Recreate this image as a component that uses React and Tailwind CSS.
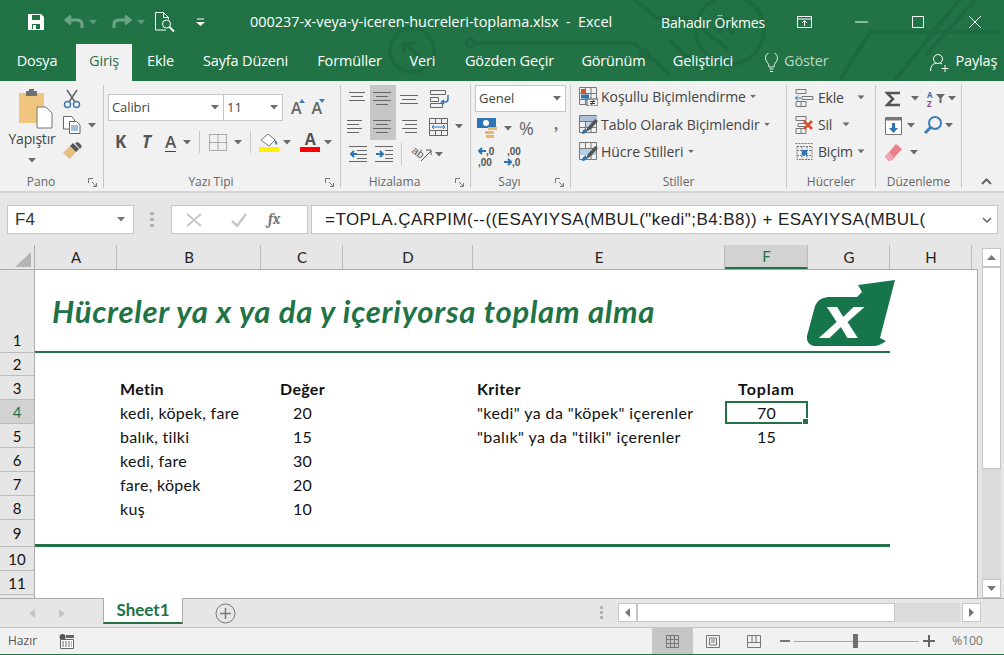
import React from 'react';

const ui = { fontFamily: '"Open Sans", "Noto Sans", sans-serif' };
const cal = { fontFamily: 'Lato, "Liberation Sans", sans-serif' };
const arial = { fontFamily: '"Liberation Sans", Arial, sans-serif' };

const Caret = ({ color = '#6a6a6a', className = '' }) => (
  <svg width="8" height="5" viewBox="0 0 8 5" className={className}><path d="M0 0h8L4 4.5z" fill={color} /></svg>
);

const Lines = ({ rows, w = 20 }) => (
  <svg width={w} height="16" viewBox={`0 0 ${w} 16`}>
    {rows.map((r, i) => <path key={i} d={`M${r[0]} ${1.5 + i * 4}H${r[1]}`} stroke="#666" strokeWidth="1" />)}
  </svg>
);

// title bar circuit pattern
const Circuit = () => (
  <svg className="absolute left-0 top-0" width="1004" height="81" viewBox="0 0 1004 81" fill="none" stroke="#1e6a40" strokeWidth="4">
    <circle cx="412" cy="50" r="22" />
    <path d="M420 58l-15-15M404 54V43h11" />
    <circle cx="470" cy="43" r="4" />
    <path d="M474 43h160l36 32" />
    <circle cx="645" cy="54" r="4" />
    <path d="M635 0l22 18h30l42 32M670 40l30 30" />
    <circle cx="730" cy="30" r="34" />
    <path d="M734 34L722 22M720 34V20h14" strokeWidth="5" />
    <path d="M840 80l30-48h130M895 80l64-80M925 56l50-56" />
  </svg>
);

const Logo = () => (
  <svg className="absolute left-[806px] top-[9px] overflow-visible" width="91" height="70" viewBox="806 279 91 70">
    <path d="M895 280L858 285L862 292L857 297H828Q818 298 815 306L807 336Q806 344 814 346H873Q880 346 886 341L880 338Z" fill="#17754c" />
    <text transform="translate(822 338) scale(1.2 1)" fill="#fff" style={arial} fontWeight="700" fontStyle="italic" fontSize="60">x</text>
  </svg>
);

const tabs = [
  ['Dosya', 'w-[74px] pr-[4px]'], ['Giriş', 'w-[56px] bg-[#f1f1f1] text-[#217346]'], ['Ekle', 'w-[57px]'], ['Sayfa Düzeni', 'w-[113px]'],
  ['Formüller', 'w-[95px]'], ['Veri', 'w-[51px]'], ['Gözden Geçir', 'w-[123px]'], ['Görünüm', 'w-[85px]'], ['Geliştirici', 'w-[94px]'],
];

const TitleBar = () => (
  <div className="relative h-[81px] bg-[#217346] text-white" style={ui}>
    <Circuit />
    <div className="relative flex h-[44px] items-center">
      <svg className="ml-[28px]" width="16" height="16" viewBox="0 0 16 16"><path d="M0 0h13l3 3v13H0z" fill="#fff" /><path d="M4 1h8v5H4zM4 10h8v5H4z" fill="#217346" /><path d="M5 11h3v4H5z" fill="#fff" /></svg>
      <svg className="ml-[20px]" width="20" height="16" viewBox="0 0 20 16" fill="none" stroke="#6aa484" strokeWidth="3"><path d="M7 2L2 6l5 4M2 6h10q6 0 6 4v4" /></svg>
      <Caret color="#5d9c7b" className="ml-[5px]" />
      <svg className="ml-[15px]" width="20" height="16" viewBox="0 0 20 16" fill="none" stroke="#6aa484" strokeWidth="3"><path d="M13 2l5 4-5 4M18 6H8q-6 0-6 4v4" /></svg>
      <Caret color="#5d9c7b" className="ml-[5px]" />
      <svg className="ml-[10px]" width="20" height="20" viewBox="0 0 20 20" fill="none" stroke="#fff" strokeWidth="1"><path d="M11 18H.5V.5h8l5 5v2M8.5.5v5h5" /><circle cx="11.5" cy="12" r="4" /><path d="M14.5 15l4.5 4.5" strokeWidth="2" /></svg>
      <svg className="ml-[21px]" width="9" height="9" viewBox="0 0 9 9"><path d="M1 1h7" stroke="#fff" /><path d="M0 4h9L4.5 8z" fill="#fff" /></svg>
      <div className="ml-[45px] w-[411px] whitespace-pre text-[14.5px] tracking-[-0.05px]">000237-x-veya-y-iceren-hucreleri-toplama.xlsx  -  Excel</div>
      <div className="w-[136px] text-[14px] tracking-[-0.15px]">Bahadır Örkmes</div>
      <svg width="15" height="12" viewBox="0 0 15 12" fill="none" stroke="#fff"><path d="M.5.5h14v11H.5zM.5 3h14M7.5 10V5M5 7l2.500-2.500L10 7" /></svg>
      <svg className="ml-[43px]" width="13" height="2" viewBox="0 0 13 2"><path d="M0 1h13" stroke="#fff" /></svg>
      <svg className="ml-[44px]" width="12" height="12" viewBox="0 0 12 12"><path d="M.5.5h11v11H.5z" fill="none" stroke="#fff" /></svg>
      <svg className="ml-[45px]" width="12" height="12" viewBox="0 0 12 12"><path d="M0 0l12 12M12 0L0 12" stroke="#fff" /></svg>
    </div>
    <div className="relative flex h-[37px] pl-[2px] text-[14.5px] tracking-[-0.15px]">
      {tabs.map(([t, c]) => <div key={t} className={`flex items-center justify-center pb-[3px] ${c}`}>{t}</div>)}
      <svg className="ml-[14px] mt-[9px]" width="15" height="20" viewBox="0 0 15 20" fill="none" stroke="#e4efe8"><path d="M5 14q0-3-2-5a6 6 0 1 1 9 0q-2 2-2 5zM5.500 16h4M6 18.500h3" /></svg>
      <div className="ml-[5px] flex items-center pb-[3px] text-[#bcd6c7]">Göster</div>
      <svg className="ml-[101px] mt-[9px]" width="20" height="20" viewBox="0 0 20 20" fill="none" stroke="#fff"><circle cx="8" cy="6" r="4.500" /><path d="M.5 18q0-7 6-8M10 10l2 1M15 12v7M11.500 15.500h7" /></svg>
      <div className="ml-[6px] flex items-center pb-[3px]">Paylaş</div>
    </div>
  </div>
);

const Group = ({ label, w, launcher, children }) => (
  <div className={`relative flex h-[103px] shrink-0 flex-col border-r border-[#c6c6c6] ${w}`}>
    <div className="h-[87px] shrink-0">{children}</div>
    <div className={`shrink-0 pt-[3px] text-center text-[12px] leading-[14px] text-[#666] ${launcher ? 'pr-[22px]' : ''}`}>{label}</div>
    {launcher && (
      <svg className="absolute bottom-[1px] right-[6px]" width="9" height="9" viewBox="0 0 9 9" fill="none" stroke="#777"><path d="M.5 5V.5H5M4 4l4 4M8.500 5v3.500H5" /></svg>
    )}
  </div>
);

const Btn = ({ className = '', children }) => <div className={`flex items-center justify-center ${className}`}>{children}</div>;

const Pano = () => (
  <Group label="Pano" w="w-[103px]" launcher>
    <div className="flex h-full text-[#444]">
      <div className="flex w-[58px] flex-col items-center pl-[4px] pt-[4px]">
        <svg className="ml-[6px]" width="36" height="40" viewBox="0 0 36 40">
          <path d="M2 4h25v30H2z" fill="#f0c67e" />
          <path d="M9 2h11v5H9z" fill="#707070" /><path d="M12 0h5v3h-5z" fill="#707070" />
          <path d="M20 18h9l6 6v15H20z" fill="#fff" stroke="#777" />
        </svg>
        <div className="mt-[1px] text-[14px] leading-[18px] tracking-[-0.2px]">Yapıştır</div>
        <Caret className="mt-[10px]" />
      </div>
      <div className="flex flex-col pl-[4px] pt-[4px]">
        <svg width="18" height="20" viewBox="0 0 18 20" fill="none"><path d="M4 1l8 12M14 1L6 13" stroke="#666" strokeWidth="1.500" /><circle cx="4.500" cy="15.500" r="3" stroke="#3e7cb8" strokeWidth="1.500" /><circle cx="13.500" cy="15.500" r="3" stroke="#3e7cb8" strokeWidth="1.500" /></svg>
        <div className="mt-[7px] flex items-center">
          <svg width="18" height="18" viewBox="0 0 18 18" fill="#fff" stroke="#666"><path d="M.5.5h8l3 3V13H.5z" /><path d="M6.500 5.500h7l3.500 3.500v8.500H6.500z" /><path d="M8 10h7M8 12h7M8 14h7" stroke="#3e7cb8" /></svg>
          <Caret className="ml-[7px]" />
        </div>
        <svg className="mt-[8px]" width="19" height="17" viewBox="0 0 19 17"><path d="M0 11l7-7 6 6-6 7q-3-2-7-6z" fill="#e6bf82" /><path d="M7 4l3-3 6 6-3 3zM12 1l3-1 4 4-2 3z" fill="#555" /></svg>
      </div>
    </div>
  </Group>
);

const YaziTipi = () => (
  <Group label="Yazı Tipi" w="w-[237px]" launcher>
    <div className="pl-[4px] pt-[9px] text-[#444]">
      <div className="flex h-[27px] items-center">
        <div className="flex h-full w-[116px] items-center justify-between border border-[#c6c6c6] bg-white pl-[3px] pr-[4px] text-[13px] tracking-[-0.1px]">Calibri<Caret /></div>
        <div className="flex h-full w-[59px] items-center justify-between border border-l-0 border-[#c6c6c6] bg-white pl-[3px] pr-[4px] text-[13px]">11<Caret /></div>
        <div className="ml-[8px] text-[16px] font-semibold text-[#666]">A</div>
        <svg className="mb-[13px] ml-[-3px]" width="6" height="4" viewBox="0 0 6 4"><path d="M0 4h6L3 0z" fill="#3e7cb8" /></svg>
        <div className="ml-[7px] text-[16px] font-semibold text-[#666]">A</div>
        <svg className="mb-[13px] ml-[-3px]" width="6" height="4" viewBox="0 0 6 4"><path d="M0 0h6L3 4z" fill="#3e7cb8" /></svg>
      </div>
      <div className="mt-[9px] flex h-[24px] items-center">
        <div className="ml-[7px] w-[27px] text-[17px] font-bold text-[#555]">K</div>
        <div className="w-[23px] text-[17px] font-bold italic text-[#555]">T</div>
        <div className="border-b border-[#444] text-[17px] font-semibold leading-[19px] text-[#555]">A</div>
        <Caret className="ml-[7px]" />
        <div className="ml-[8px] h-[22px] w-px bg-[#c6c6c6]" />
        <svg className="ml-[9px]" width="18" height="17" viewBox="0 0 18 17" fill="none" stroke="#666" strokeDasharray="1 1"><path d="M.5.5h17v16H.5zM.5 8.500h17M9 .5v16" /></svg>
        <Caret className="ml-[7px]" />
        <div className="ml-[8px] h-[22px] w-px bg-[#c6c6c6]" />
        <div className="ml-[8px] flex w-[20px] flex-col items-center">
          <svg width="18" height="14" viewBox="0 0 18 14"><path d="M1 7l7-6 7 6-6 6z" fill="#fff" stroke="#777" /><path d="M15 7q3 2 2 5-3-1-2-5z" fill="#3e7cb8" /></svg>
          <div className="h-[5px] w-[20px] bg-[#fff200]" />
        </div>
        <Caret className="ml-[4px]" />
        <div className="ml-[9px] flex w-[20px] flex-col items-center">
          <div className="text-[16px] font-bold leading-[14px] text-[#555]">A</div>
          <div className="mt-[1px] h-[5px] w-[20px] bg-[#f00]" />
        </div>
        <Caret className="ml-[4px]" />
      </div>
    </div>
  </Group>
);

const alignRows = [
  [[[0, 18], [0, 18], [3, 15]], [[0, 18], [3, 15], [0, 18], [3, 15]], [[0, 18], [3, 15], [0, 18], [3, 15]]],
  [[[0, 15], [0, 12], [0, 15], [0, 12]], [[0, 18], [3, 15], [0, 18], [3, 15]], [[3, 18], [6, 18], [3, 18], [6, 18]]],
];

const Hizalama = () => (
  <Group label="Hizalama" w="w-[130px]" launcher>
    <div className="pl-[3px]">
      <div className="flex h-[28px] items-center">
        <Btn className="h-full w-[26px]"><Lines rows={[[2, 18], [4, 16], [2, 18]]} /></Btn>
        <Btn className="h-full w-[26px] bg-[#c6c6c6]"><Lines rows={alignRows[0][1]} /></Btn>
        <Btn className="h-full w-[26px] pt-[6px]"><Lines rows={[[1, 19], [3, 17], [1, 19]]} /></Btn>
        <svg className="ml-[8px]" width="20" height="18" viewBox="0 0 20 18" fill="none" stroke="#666"><path d="M.5.5h15v4H.5zM.5 7.500h8v4h-8zM.5 13.500h12v4H.5z" /><path d="M18 5v4q0 3-3 3h-3M14 10l-2.500 2 2.500 2" stroke="#2e75b6" strokeWidth="1.500" /></svg>
      </div>
      <div className="flex h-[27px] items-center">
        <Btn className="h-full w-[26px]"><Lines rows={alignRows[1][0]} /></Btn>
        <Btn className="h-full w-[26px] bg-[#c6c6c6]"><Lines rows={alignRows[1][1]} /></Btn>
        <Btn className="h-full w-[26px]"><Lines rows={alignRows[1][2]} /></Btn>
        <svg className="ml-[7px]" width="19" height="18" viewBox="0 0 19 18" fill="none" stroke="#666"><path d="M.5.5h18v17H.5zM.5 5.500h18M.5 12.500h18M6.500.5v5M12.500.5v5M6.500 12.500v5M12.500 12.500v5" /><path d="M3 9h13M5 7L3 9l2 2M14 7l2 2-2 2" stroke="#2e75b6" /></svg>
        <Caret className="ml-[7px]" />
      </div>
      <div className="flex h-[28px] items-center">
        <svg className="ml-[5px]" width="18" height="16" viewBox="0 0 18 16" fill="none" stroke="#666"><path d="M0 .5h18M8 4.500h10M8 8.500h10M8 12.500h10M0 15.500h18" /><path d="M8 8H2M5 5L2 8l3 3" stroke="#2e75b6" strokeWidth="2" /></svg>
        <svg className="ml-[8px]" width="18" height="16" viewBox="0 0 18 16" fill="none" stroke="#666"><path d="M0 .5h18M10 4.500h8M10 8.500h8M10 12.500h8M0 15.500h18" /><path d="M1 8h6M5 5l3 3-3 3" stroke="#2e75b6" strokeWidth="2" /></svg>
        <div className="ml-[8px] h-[22px] w-px bg-[#c6c6c6]" />
        <svg className="ml-[8px] overflow-visible" width="23" height="17" viewBox="0 0 23 17" fill="none" stroke="#555">
          <text transform="translate(1 6) rotate(35)" fontSize="11" fill="#555" stroke="none" style={arial}>ab</text>
          <path d="M11 15L21 5M16 4h5v5" />
        </svg>
        <Caret className="ml-[2px]" />
      </div>
    </div>
  </Group>
);

const Sayi = () => (
  <Group label="Sayı" w="w-[100px]" launcher>
    <div className="pl-[4px]">
      <div className="flex h-[27px] w-[91px] items-center justify-between border border-[#c6c6c6] bg-white pl-[3px] pr-[4px] text-[13px] text-[#444]">Genel<Caret /></div>
      <div className="flex h-[30px] items-center pl-[2px] pt-[2px]">
        <svg width="20" height="20" viewBox="0 0 20 20"><path d="M0 0h19v10H0z" fill="#2e75b6" /><circle cx="9" cy="5" r="3" fill="#fff" /><path d="M11 9h9v3h-9zM8 13h9v3H8zM9 17h8v3H9z" fill="#e8b867" /></svg>
        <Caret className="ml-[7px]" />
        <div className="ml-[7px] text-[18px] leading-[20px] text-[#666]">%</div>
        <div className="ml-[20px] pb-[6px] font-serif text-[18px] font-bold leading-[18px] text-[#666]">,</div>
      </div>
      <div className="flex h-[28px] items-center pl-[3px] pt-[1px]" style={arial}>
        <div className="relative h-[22px] w-[17px] text-[10px] font-bold leading-[11px] text-[#555]">
          <div className="pl-[8px]">,0</div><div>,00</div>
          <svg className="absolute left-[0px] top-[1px]" width="8" height="8" viewBox="0 0 8 8" fill="none" stroke="#2e75b6" strokeWidth="2"><path d="M8 4H1M4 1L1 4l3 3" /></svg>
        </div>
        <div className="relative ml-[9px] h-[22px] w-[17px] text-[10px] font-bold leading-[11px] text-[#555]">
          <div className="pl-[3px]">,00</div><div className="pl-[8px]">,0</div>
          <svg className="absolute left-[0px] top-[12px]" width="8" height="8" viewBox="0 0 8 8" fill="none" stroke="#2e75b6" strokeWidth="2"><path d="M0 4h7M4 1l3 3-3 3" /></svg>
        </div>
      </div>
    </div>
  </Group>
);

const CondIcon = ({ kind }) => (
  <svg width="19" height="19" viewBox="0 0 19 19" fill="none" stroke="#777">
    <path d="M.5.5h17v17H.5zM.5 6.500h17M.5 12.500h17M6.500.5v17M12 .5v17" />
    {kind === 0 && <><path d="M2 2h4v4H2z" fill="#d9502e" stroke="none" /><path d="M2 7.500h8v4H2z" fill="#2e75b6" stroke="none" /><path d="M8 12h11v7H8z" fill="#f1f1f1" stroke="#555" /><path d="M11 14.500h5M11 16.500h5M14.500 13l-2 5" stroke="#444" /></>}
    {kind === 1 && <><path d="M1 1h17v5H1z" fill="#aebfd6" stroke="none" /><path d="M7 7h5v5H7z" fill="#c2d2e6" stroke="none" /><path d="M5 18l4-6 7-8 3 2-7 8z" fill="#555" stroke="none" /><path d="M3 19q0-4 3-5l2 2q-1 3-5 3z" fill="#2e75b6" stroke="none" /></>}
    {kind === 2 && <><path d="M1 7h16v6H1z" fill="#b7cfe6" stroke="none" /><path d="M6 18l3-6 7-8 3 2-7 8z" fill="#555" stroke="none" /><path d="M3 19q0-4 3-5l2 2q-1 3-5 3z" fill="#2e75b6" stroke="none" /></>}
  </svg>
);

const Stiller = () => (
  <Group label="Stiller" w="w-[216px]">
    <div className="flex flex-col pl-[8px] text-[14px] tracking-[-0.05px] text-[#444]">
      {[['Koşullu Biçimlendirme', 0, 'mt-[2px]'], ['Tablo Olarak Biçimlendir', 1, 'mt-[9px]'], ['Hücre Stilleri', 2, 'mt-[8px]']].map(([t, k, c]) => (
        <div key={t} className={`flex h-[19px] items-center ${c}`}>
          <CondIcon kind={k} />
          <span className="ml-[3px]">{t}</span>
          <Caret className="ml-[3px] scale-75" />
        </div>
      ))}
    </div>
  </Group>
);

const Hucreler = () => (
  <Group label="Hücreler" w="w-[89px]">
    <div className="flex flex-col pl-[8px] text-[14px] tracking-[-0.2px] text-[#444]">
      <div className="mt-[3px] flex h-[19px] items-center">
        <svg width="19" height="18" viewBox="0 0 19 18" fill="none" stroke="#777"><path d="M1 .5h10v4H1zM1 12.500h10v5H1zM6 12.500v5M7 7.500h11v3H7z" /><path d="M6 9H0M3 6.500L.5 9 3 11.500" stroke="#2e75b6" /></svg>
        <span className="ml-[4px] w-[39px]">Ekle</span><Caret className="scale-90" />
      </div>
      <div className="mt-[8px] flex h-[19px] items-center">
        <svg width="19" height="18" viewBox="0 0 19 18" fill="none" stroke="#777"><path d="M1 .5h10v4H1zM1 12.500h10v5H1zM6 12.500v5M3 7.500h9v3H3z" /><path d="M9 5l8 8M17 5l-8 8" stroke="#d9502e" strokeWidth="2.500" /></svg>
        <span className="ml-[4px] w-[24px]">Sil</span><Caret className="scale-90" />
      </div>
      <div className="mt-[8px] flex h-[19px] items-center">
        <svg width="19" height="19" viewBox="0 0 19 19" fill="none" stroke="#777"><path d="M.5 1.500h18M2 4.500h15v13H2zM2 8.500h15M2 13.500h15M7 4.500v13M12 4.500v13" strokeDasharray="2 1" /><path d="M7 8h5v5H7z" fill="#2e75b6" stroke="none" /></svg>
        <span className="ml-[4px] w-[39px]">Biçim</span><Caret className="scale-90" />
      </div>
    </div>
  </Group>
);

const Duzenleme = () => (
  <Group label="Düzenleme" w="w-[86px]">
    <div className="pl-[9px]">
      <div className="mt-[4px] flex h-[19px] items-center">
        <svg width="16" height="16" viewBox="0 0 16 16" fill="none" stroke="#555" strokeWidth="2.500"><path d="M15 2H2l6 6-6 6h13" /></svg>
        <Caret className="ml-[10px]" />
        <div className="ml-[8px] text-[8px] font-bold leading-[9px]"><div className="text-[#2e75b6]">A</div><div className="text-[#7a4fa3]">Z</div></div>
        <svg className="ml-[3px]" width="9" height="9" viewBox="0 0 9 9"><path d="M0 0h9L5.500 4v5h-2V4z" fill="#666" /></svg>
        <Caret className="ml-[3px]" />
      </div>
      <div className="mt-[8px] flex h-[19px] items-center">
        <svg width="17" height="18" viewBox="0 0 17 18"><path d="M.5.5h16v17H.5z" fill="#fff" stroke="#777" /><path d="M.5.5h16v3H.5z" fill="#777" /><path d="M7 6h3v5h3l-4.500 5L4 11h3z" fill="#2e75b6" /></svg>
        <Caret className="ml-[5px]" />
        <svg className="ml-[9px]" width="18" height="19" viewBox="0 0 18 19" fill="none" stroke="#3e7cb8"><circle cx="11" cy="7" r="6" strokeWidth="2" /><path d="M6.500 11.500L1 17" strokeWidth="3" /></svg>
        <Caret className="ml-[3px]" />
      </div>
      <div className="mt-[8px] flex h-[19px] items-center">
        <svg width="17" height="17" viewBox="0 0 17 17"><path d="M11 0l6 5-10 11-3 1-4-4z" fill="#ec7d88" /><path d="M0 12l4-4 5 5-3 3H3z" fill="#f3a6ad" /></svg>
        <Caret className="ml-[8px]" />
      </div>
    </div>
  </Group>
);

const Ribbon = () => (
  <div className="relative flex h-[112px] border-b-2 border-[#d4d4d4] bg-[#f1f1f1] pl-px pt-[4px]" style={ui}>
    <Pano />
    <YaziTipi />
    <Hizalama />
    <Sayi />
    <Stiller />
    <Hucreler />
    <Duzenleme />
    <svg className="absolute bottom-[6px] right-[12px]" width="11" height="7" viewBox="0 0 11 7" fill="none" stroke="#666" strokeWidth="2"><path d="M1 6l4.500-4.500L10 6" /></svg>
  </div>
);

const FormulaBar = () => (
  <div className="flex h-[52px] items-start pl-[7px] pt-[12px]">
    <div className="flex h-[29px] w-[127px] items-center justify-between border border-[#c6c6c6] bg-white pl-[7px] pr-[8px] text-[17px] text-[#333]" style={arial}>F4<Caret color="#777" /></div>
    <div className="ml-[16px] mt-[7px] flex w-[4px] flex-col gap-[3px]">
      <div className="h-[3px] bg-[#b4b4b4]" /><div className="h-[3px] bg-[#b4b4b4]" /><div className="h-[3px] bg-[#b4b4b4]" />
    </div>
    <div className="ml-[17px] flex h-[29px] w-[137px] items-center border border-[#c6c6c6] bg-white">
      <svg className="ml-[14px]" width="16" height="14" viewBox="0 0 16 14"><path d="M1 1l14 12M15 1L1 13" stroke="#c8c8c8" strokeWidth="2" /></svg>
      <svg className="ml-[29px]" width="16" height="14" viewBox="0 0 16 14" fill="none"><path d="M1 8l5 5L15 1" stroke="#c8c8c8" strokeWidth="2.500" /></svg>
      <div className="ml-[21px] font-serif text-[15px] font-bold italic text-[#777]">fx</div>
    </div>
    <div className="relative ml-[3px] flex h-[29px] w-[687px] items-center border border-[#c6c6c6] bg-white pl-[13px] text-[17px] tracking-[0.45px] text-[#222]" style={arial}>
      <span>=TOPLA.ÇARPIM(--((ESAYIYSA(MBUL("kedi";B4:B8)) + ESAYIYSA(MBUL(</span>
      <svg className="absolute right-[5px] top-[11px]" width="10" height="6" viewBox="0 0 10 6" fill="none" stroke="#666" strokeWidth="1.500"><path d="M1 1l4 4 4-4" /></svg>
    </div>
  </div>
);

const cols = [
  ['A', 'w-[82px]'], ['B', 'w-[144px]'], ['C', 'w-[82px]'], ['D', 'w-[130px]'], ['E', 'w-[252px]'], ['F', 'w-[83px]'], ['G', 'w-[82px]'], ['H', 'w-[82px]'],
];

const ColHeaders = () => (
  <div className="flex h-[25px] border-b border-[#ababab] text-[15px] text-[#222]" style={cal}>
    <div className="flex w-[35px] shrink-0 items-end justify-end border-r border-[#ababab] pb-[2px] pr-[3px]">
      <svg width="16" height="15" viewBox="0 0 16 15"><path d="M16 0v15H0z" fill="#b4b4b4" /></svg>
    </div>
    {cols.map(([c, w]) => (
      <div key={c} className={`flex shrink-0 items-center justify-center border-r border-[#bcbcbc] pl-[1px] ${w} ${c === 'F' ? 'border-b-2 border-b-[#217346] bg-[#d2d2d2] text-[#217346]' : ''}`}>{c}</div>
    ))}
  </div>
);

const rows = [
  { n: 1, h: 'h-[83px]', head: 'items-end pb-[1px]', line: 'border-b-2' },
  { n: 2, h: 'h-[23px]' },
  { n: 3, h: 'h-[24px]', b: 'Metin', c: 'Değer', e: 'Kriter', f: 'Toplam', bold: true },
  { n: 4, h: 'h-[24px]', b: 'kedi, köpek, fare', c: '20', e: '"kedi" ya da "köpek" içerenler', f: '70', sel: true },
  { n: 5, h: 'h-[24px]', b: 'balık, tilki', c: '15', e: '"balık" ya da "tilki" içerenler', f: '15' },
  { n: 6, h: 'h-[24px]', b: 'kedi, fare', c: '30' },
  { n: 7, h: 'h-[24px]', b: 'fare, köpek', c: '20' },
  { n: 8, h: 'h-[24px]', b: 'kuş', c: '10' },
  { n: 9, h: 'h-[27px]', line: 'border-b-[3px]' },
  { n: 10, h: 'h-[24px]' },
  { n: 11, h: 'h-[24px]' },
];

const Row = ({ r }) => (
  <div className={`flex shrink-0 ${r.h}`}>
    <div className={`flex w-[35px] shrink-0 justify-center border-r border-b border-r-[#ababab] border-b-[#bcbcbc] pt-[1px] text-[15px] tracking-normal ${r.head || 'items-center'} ${r.n === 4 ? 'bg-[#d2d2d2] text-[#217346]' : 'bg-[#e6e6e6]'}`}>
      {r.n}
    </div>
    <div className={`flex h-full w-[855px] items-center border-[#217346] pt-[1px] ${r.line || ''} ${r.bold ? 'font-bold' : ''}`}>
      <div className="w-[82px]" />
      <div className="w-[144px] pl-[3px]">{r.b}</div>
      <div className="w-[82px] pl-[1px] text-center">{r.c}</div>
      <div className="w-[130px]" />
      <div className="w-[252px] pl-[4px] tracking-[0.4px]">{r.e}</div>
      <div className={`relative flex h-full w-[83px] items-center justify-center ${r.sel ? 'border-2 border-[#217346]' : ''} ${r.bold ? 'tracking-[0.9px]' : ''}`}>
        {r.f}
        {r.sel && <div className="absolute bottom-[-3px] right-[-3px] box-content h-[5px] w-[5px] border border-white bg-[#217346]" />}
      </div>
    </div>
  </div>
);

const VScroll = () => (
  <div className="flex w-[26px] shrink-0 flex-col pl-[4px] pr-[3px] pt-[3px]">
    <div className="flex h-[19px] shrink-0 items-center justify-center border border-[#c6c6c6] bg-white"><svg width="9" height="5" viewBox="0 0 9 5"><path d="M0 5h9L4.500 0z" fill="#777" /></svg></div>
    <div className="h-[202px] shrink-0 border border-[#c6c6c6] bg-white" />
    <div className="h-[110px] shrink-0 bg-[#dbdbdb]" />
    <div className="flex h-[19px] shrink-0 items-center justify-center border border-[#c6c6c6] bg-white"><svg width="9" height="5" viewBox="0 0 9 5"><path d="M0 0h9L4.500 5z" fill="#777" /></svg></div>
  </div>
);

const Sheet = () => (
  <div className="relative h-[328px] overflow-hidden border-r border-[#ababab] bg-white text-[16px] tracking-[0.3px] text-[#111]" style={cal}>
    {rows.map(r => <Row key={r.n} r={r} />)}
    <div className="h-[4px] w-[35px] border-r border-[#ababab] bg-[#e6e6e6]" />
    <Logo />
    <h1 className="absolute left-[52px] top-[22px] text-[31px] font-bold italic leading-[38px] tracking-[0.77px] text-[#217346]">Hücreler ya x ya da y içeriyorsa toplam alma</h1>
  </div>
);

const SheetTabs = () => (
  <div className="flex h-[29px] border-t border-[#ababab]">
    <div className="flex w-[103px] items-center pl-[29px]">
      <svg width="6" height="9" viewBox="0 0 6 9"><path d="M6 0v9L0 4.500z" fill="#c4c4c4" /></svg>
      <svg className="ml-[24px]" width="6" height="9" viewBox="0 0 6 9"><path d="M0 0v9l6-4.500z" fill="#c4c4c4" /></svg>
    </div>
    <div className="mt-[-1px] flex h-[26px] w-[80px] items-center justify-center border-x border-[#ababab] border-b-2 border-b-[#217346] bg-white text-[17px] font-bold text-[#217346]" style={cal}>Sheet1</div>
    <svg className="ml-[32px] mt-[4px]" width="21" height="21" viewBox="0 0 21 21" fill="none" stroke="#777"><circle cx="10.500" cy="10.500" r="9.500" /><path d="M5 10.500h11M10.500 5v11" strokeWidth="1.500" /></svg>
    <div className="ml-[364px] mt-[7px] flex w-[3px] flex-col gap-[2px]">
      <div className="h-[3px] bg-[#b4b4b4]" /><div className="h-[3px] bg-[#b4b4b4]" /><div className="h-[3px] bg-[#b4b4b4]" />
    </div>
    <div className="ml-[15px] mt-[4px] flex h-[19px]">
      <div className="flex w-[19px] items-center justify-center border border-[#c6c6c6] bg-white"><svg width="5" height="9" viewBox="0 0 5 9"><path d="M5 0v9L0 4.500z" fill="#777" /></svg></div>
      <div className="w-[258px] border border-[#c6c6c6] bg-white" />
      <div className="w-[65px] bg-[#dbdbdb]" />
      <div className="ml-[2px] flex w-[19px] items-center justify-center border border-[#c6c6c6] bg-white"><svg width="5" height="9" viewBox="0 0 5 9"><path d="M0 0v9l5-4.500z" fill="#777" /></svg></div>
    </div>
  </div>
);

const StatusBar = () => (
  <div className="flex h-[28px] items-center border-t border-b border-t-[#c6c6c6] border-b-[#217346] bg-[#f1f1f1] text-[12px] text-[#555]" style={ui}>
    <div className="w-[59px] pl-[8px]">Hazır</div>
    <svg width="15" height="15" viewBox="0 0 15 15"><circle cx="3.500" cy="3" r="3" fill="#555" /><path d="M1.500 5.500h13v9h-13z" fill="#fff" stroke="#666" /><path d="M3 8h10M3 10h10M3 12h10" stroke="#666" strokeDasharray="2 1" /><path d="M7 1h8v3H7z" fill="#666" /></svg>
    <div className="ml-[578px] flex h-full w-[41px] items-center justify-center bg-[#c6c6c6]">
      <svg width="13" height="13" viewBox="0 0 13 13" fill="none" stroke="#777"><path d="M.5.5h12v12H.5zM.5 4.500h12M.5 8.500h12M4.500.5v12M8.500.5v12" /></svg>
    </div>
    <svg className="ml-[13px]" width="14" height="13" viewBox="0 0 14 13" fill="none" stroke="#777"><path d="M.5.5h13v12H.5zM3.500 3h7v7h-7zM5 5h4M5 7h4" /></svg>
    <svg className="ml-[27px]" width="14" height="13" viewBox="0 0 14 13" fill="none" stroke="#777"><path d="M.5.5h13v12H.5zM.5 7.500h13M5 .5v7M9 .5v7" /></svg>
    <svg className="ml-[19px]" width="10" height="3" viewBox="0 0 10 3"><path d="M0 0h10v2H0z" fill="#777" /></svg>
    <div className="relative ml-[4px] flex h-[14px] w-[125px] items-center">
      <div className="h-px w-full bg-[#a6a6a6]" />
      <div className="absolute left-[59px] top-0 h-[14px] w-[5px] bg-[#6f6f6f]" />
    </div>
    <svg className="ml-[4px]" width="12" height="12" viewBox="0 0 12 12"><path d="M0 5h12v2H0zM5 0h2v12H5z" fill="#666" /></svg>
    <div className="ml-[17px] text-[12.5px] tracking-[-0.3px] text-[#777]">%100</div>
  </div>
);

export default function App() {
  return (
    <div className="h-[655px] w-[1004px] overflow-hidden bg-[#e6e6e6]">
      <TitleBar />
      <Ribbon />
      <FormulaBar />
      <div className="flex">
        <div className="w-[978px] shrink-0">
          <ColHeaders />
          <Sheet />
        </div>
        <VScroll />
      </div>
      <SheetTabs />
      <StatusBar />
    </div>
  );
}
